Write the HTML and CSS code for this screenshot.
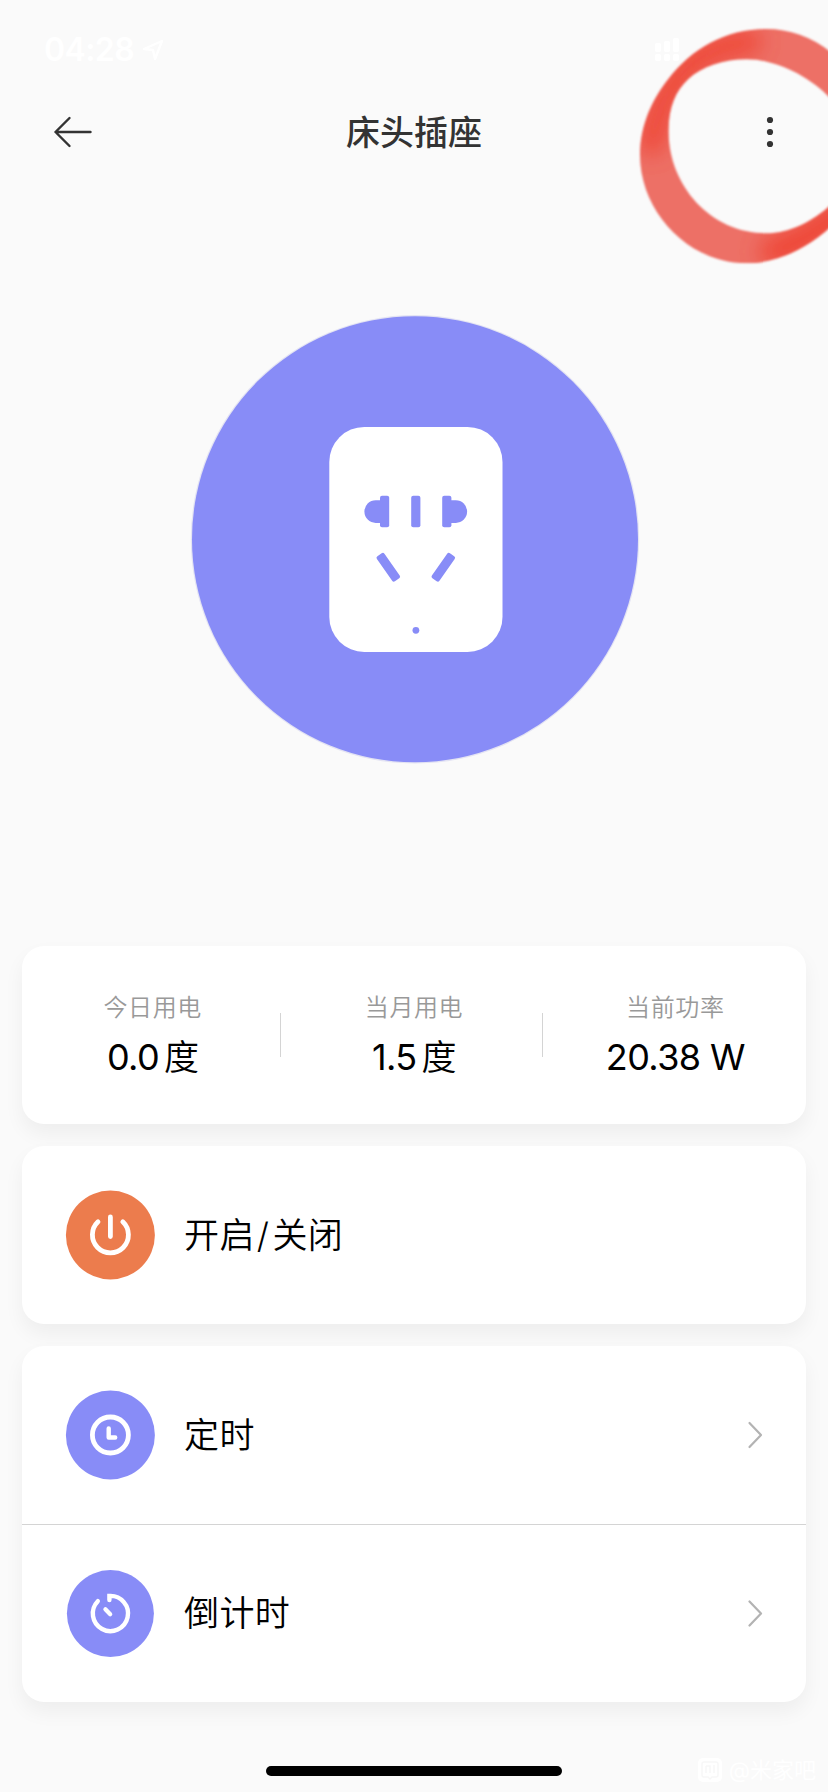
FILE: index.html
```html
<!DOCTYPE html>
<html lang="zh-CN">
<head>
<meta charset="utf-8">
<title>床头插座</title>
<link rel="stylesheet" href="styles.css">
</head>
<body>
<div class="screen">
  <div class="status">
    <span class="time">04:28</span>
    <svg class="locate" width="22" height="22" viewBox="0 0 22 22"><path d="M2 10 L20 2 L13 20 L11 11 Z" fill="none" stroke="#fff" stroke-width="2.4" stroke-linejoin="round"/></svg>
    <svg class="signal" width="26" height="24" viewBox="0 0 26 24" fill="#fff"><rect x="0" y="5" width="6" height="9" rx="2"/><rect x="9" y="3" width="6" height="11" rx="2"/><rect x="18" y="0" width="6" height="14" rx="2"/><rect x="0" y="16" width="6" height="7" rx="2"/><rect x="9" y="16" width="6" height="7" rx="2"/><rect x="18" y="16" width="6" height="7" rx="2"/></svg>
  </div>

  <header class="nav">
    <svg class="back" width="40" height="32" viewBox="0 0 40 32"><path d="M17.5 2 L3.5 16 L17.5 30 M3.5 16 H38.5" fill="none" stroke="#333" stroke-width="2.4" stroke-linecap="round" stroke-linejoin="round"/></svg>
    <h1 class="title">床头插座</h1>
    <svg class="more" width="8" height="32" viewBox="0 0 8 32" fill="#333"><circle cx="4" cy="4" r="3.1"/><circle cx="4" cy="16" r="3.1"/><circle cx="4" cy="28" r="3.1"/></svg>
  </header>

  <div class="hero">
    <svg width="450" height="450" viewBox="0 0 450 450">
      <circle cx="225" cy="225.3" r="224.2" fill="#e3e3f3"/>
      <circle cx="225" cy="225.3" r="223" fill="#888cf7"/>
      <rect x="139.3" y="112.9" width="173.2" height="225" rx="35" fill="#fff"/>
      <g fill="#888cf7">
        <path d="M190.2 186.3h-4.5a11.3 11.3 0 0 0 0 22.6h4.5z"/>
        <rect x="190" y="181.8" width="9.2" height="31.4" rx="2"/>
        <rect x="221.2" y="181.8" width="9.2" height="31.4" rx="2"/>
        <rect x="252.2" y="181.8" width="9.2" height="31.4" rx="2"/>
        <path d="M261 186.3h4.8a11.3 11.3 0 0 1 0 22.6h-4.8z"/>
        <rect x="-4.6" y="-15.3" width="9.2" height="30.6" rx="2" transform="translate(198.3 253.3) rotate(-35)"/>
        <rect x="-4.6" y="-15.3" width="9.2" height="30.6" rx="2" transform="translate(253.3 253.3) rotate(35)"/>
        <circle cx="225.9" cy="316.3" r="3.4"/>
      </g>
    </svg>
  </div>

  <main class="cards">
    <section class="card stats">
      <div class="stat"><span class="label">今日用电</span><span class="value">0.0<span class="unit">度</span></span></div>
      <div class="rule"></div>
      <div class="stat"><span class="label">当月用电</span><span class="value">1.5<span class="unit">度</span></span></div>
      <div class="rule"></div>
      <div class="stat"><span class="label">当前功率</span><span class="value">20.38 W</span></div>
    </section>

    <section class="card">
      <div class="row">
        <svg class="icon" width="90" height="90" viewBox="0 0 90 90"><circle cx="45.4" cy="45" r="44.5" fill="#ec7c4d"/><path d="M33 31.8 A18 18 0 1 0 57.8 31.8 M45.4 27 V46.5" fill="none" stroke="#fff" stroke-width="4.8" stroke-linecap="round"/></svg>
        <span class="name">开启<span class="slash">/</span>关闭</span>
      </div>
    </section>

    <section class="card">
      <div class="row">
        <svg class="icon" width="90" height="90" viewBox="0 0 90 90"><circle cx="45.4" cy="45" r="44.5" fill="#888cf7"/><circle cx="45.4" cy="45" r="18" fill="none" stroke="#fff" stroke-width="4.8"/><path d="M43.7 38.5 V47.5 H50.2" fill="none" stroke="#fff" stroke-width="4.4" stroke-linecap="round" stroke-linejoin="round"/></svg>
        <span class="name">定时</span>
        <svg class="chevron" width="16" height="28" viewBox="0 0 16 28"><path d="M2.5 2 L14 14 L2.5 26" fill="none" stroke="#b3b3b3" stroke-width="2.2" stroke-linecap="round" stroke-linejoin="round"/></svg>
      </div>
      <div class="row split">
        <svg class="icon" width="90" height="90" viewBox="0 0 90 90"><circle cx="45.4" cy="44.6" r="43.5" fill="#888cf7"/><path d="M32.8 32.2 A17.6 17.6 0 1 0 44.4 26.9 V31.1" fill="none" stroke="#fff" stroke-width="4.4" stroke-linecap="round" stroke-linejoin="miter"/><path d="M40.4 40.2 L45.2 45.2" fill="none" stroke="#fff" stroke-width="4.2" stroke-linecap="round"/></svg>
        <span class="name">倒计时</span>
        <svg class="chevron" width="16" height="28" viewBox="0 0 16 28"><path d="M2.5 1.5 L14 13.5 L2.5 25.5" fill="none" stroke="#b3b3b3" stroke-width="2.2" stroke-linecap="round" stroke-linejoin="round"/></svg>
      </div>
    </section>
  </main>

  <footer class="footer">
    <div class="home-bar"></div>
    <div class="credit">
      <svg width="26" height="26" viewBox="0 0 26 26"><rect x="1" y="1" width="24" height="24" rx="5" fill="#fff"/><path d="M7 5h12q2 0 2 2v11q0 2-2 2h-4l-2 2-2-2H7q-2 0-2-2V7q0-2 2-2z M9 9v7 M9 9h4v7 M17 8v8" fill="none" stroke="#f7f7f7" stroke-width="1.4"/></svg>
      <span>@米家吧</span>
    </div>
  </footer>

  <svg class="marker" width="228" height="290" viewBox="0 0 684 870">
    <defs>
      <filter id="soft" x="-10%" y="-10%" width="120%" height="120%"><feGaussianBlur stdDeviation="3"/></filter>
      <filter id="glow" x="-50%" y="-50%" width="200%" height="200%"><feGaussianBlur stdDeviation="34"/></filter>
      <clipPath id="band"><path clip-rule="evenodd" d="M120 465 C120 375 158 296 205 237 C275 147 375 87 500 87 C640 87 790 190 830 400 C850 550 650 790 440 790 C265 790 120 635 120 465 Z M206 400 C204 325 225 275 265 237 C305 200 370 178 440 178 C580 178 760 305 770 460 C770 580 620 700 500 700 C330 700 208 555 206 400 Z"/></clipPath>
    </defs>
    <g filter="url(#soft)">
      <g clip-path="url(#band)">
        <rect width="900" height="870" fill="#ed7066"/>
        <g filter="url(#glow)" fill="none" stroke="#ee4435" stroke-linecap="round">
          <path d="M155 430 C165 345 200 275 245 220 C300 160 360 135 450 125" stroke-width="70"/>
          <path d="M520 755 C590 735 650 695 730 630" stroke-width="84"/>
        </g>
      </g>
    </g>
  </svg>
</div>
</body>
</html>
```
FILE: styles.css
```css
* { box-sizing: border-box; }

body {
  margin: 0;
  background: #fafafa;
  color: #000;
  font-family: Inter, "Noto Sans CJK SC", sans-serif;
}

.screen {
  position: relative;
  display: flex;
  flex-direction: column;
  width: 828px;
  height: 1792px;
  overflow: hidden;
}

.status {
  display: flex;
  align-items: center;
  height: 88px;
  padding: 12px 0 0 44px;
  color: #fff;
}

.time {
  width: 90px;
  font-size: 32px;
  font-weight: 600;
  letter-spacing: -0.6px;
  line-height: 40px;
}

.locate { margin-left: 8px; }
.signal { margin-left: 491px; }

.nav {
  display: flex;
  align-items: center;
  justify-content: space-between;
  height: 88px;
  padding: 0 54px 0 52px;
}

.title {
  margin: 0;
  padding: 2px 0 0 2px;
  color: #333;
  font-size: 34px;
  font-weight: 500;
  line-height: 50px;
}

.back { margin-right: -32px; }

.hero {
  display: flex;
  justify-content: center;
  height: 770px;
  padding: 138px 0 0 1px;
}

.cards {
  display: flex;
  flex-direction: column;
  gap: 22px;
  padding: 0 22px;
}

.card {
  border-radius: 22px;
  background: #fff;
  box-shadow: 0 10px 20px rgba(0, 0, 0, 0.05);
}

.stats {
  display: flex;
  align-items: center;
  height: 178px;
}

.stat {
  display: flex;
  flex: 1 1 0;
  flex-direction: column;
  align-items: center;
  height: 100%;
  padding-top: 43px;
}

.rule {
  width: 1px;
  height: 44px;
  margin: 0 2px 0 -3px;
  background: #d4d4d4;
}

.label {
  color: #999;
  font-size: 24px;
  font-weight: 350;
  letter-spacing: 0.6px;
  line-height: 38px;
}

.value {
  margin-top: 5px;
  font-size: 36px;
  letter-spacing: -0.6px;
  line-height: 50px;
  white-space: nowrap;
}

.unit {
  margin-left: 5px;
  font-size: 35px;
  font-weight: 350;
}

.row {
  display: flex;
  align-items: center;
  height: 178px;
  padding: 0 43px;
}

.split {
  border-top: 1px solid #d4d4d4;
}

.name {
  margin: -1px 0 0 29px;
  font-size: 35px;
  font-weight: 350;
  letter-spacing: 0.4px;
  line-height: 50px;
}

.slash {
  margin: 0 3px 0 2px;
  font-weight: 300;
}

.chevron { margin-left: auto; }

.footer {
  display: flex;
  justify-content: flex-end;
  height: 90px;
  padding-right: 12px;
}

.home-bar {
  width: 296px;
  height: 10px;
  margin: 64px 135px 0 0;
  border-radius: 5px;
  background: #000;
}

.credit {
  display: flex;
  align-items: center;
  gap: 6px;
  height: 30px;
  margin-top: 53px;
  color: #fff;
  font-size: 22px;
  line-height: 30px;
  white-space: nowrap;
}

/* Hand-drawn highlight laid over the menu button */
.marker {
  position: absolute;
  top: 0;
  right: 0;
  pointer-events: none;
}
```
